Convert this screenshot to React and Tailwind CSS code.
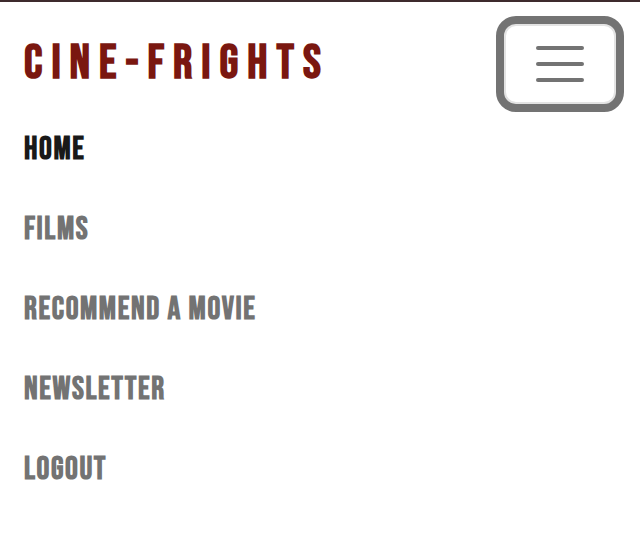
const links = ["HOME", "FILMS", "RECOMMEND A MOVIE", "NEWSLETTER", "LOGOUT"];

export default function App() {
  return (
    <header className="min-h-screen border-t-2 border-[#3e2a2d] bg-white px-4 pt-3.5 font-['Bebas_Neue','Liberation_Sans_Narrow','Liberation_Sans',sans-serif] font-bold antialiased">
      <nav aria-label="Main">
        <div className="flex items-center justify-between">
          <a
            href="#home"
            className="ml-2 whitespace-nowrap text-5xl leading-[72px] tracking-[9px] text-[#7a1710]"
          >
            CINE-FRIGHTS
          </a>
          <button
            type="button"
            aria-label="Toggle navigation"
            aria-expanded="true"
            className="flex h-24 w-32 shrink-0 items-center justify-center rounded-[20px] border-8 border-[#737373] bg-white inset-ring-2 inset-ring-[#e3e3e3]"
          >
            <span className="flex w-12 flex-col gap-3">
              <span className="h-1 rounded-full bg-[#737373]" />
              <span className="h-1 rounded-full bg-[#737373]" />
              <span className="h-1 rounded-full bg-[#737373]" />
            </span>
          </button>
        </div>
        <ul className="-mt-0.5 ml-2 text-[32px] leading-[80px] tracking-wider">
          {links.map((label, i) => (
            <li key={label}>
              <a
                href={"#" + label.toLowerCase().replaceAll(" ", "-")}
                aria-current={i === 0 ? "page" : undefined}
                className={i === 0 ? "text-[#191919]" : "text-[#737373]"}
              >
                {label}
              </a>
            </li>
          ))}
        </ul>
      </nav>
    </header>
  );
}
